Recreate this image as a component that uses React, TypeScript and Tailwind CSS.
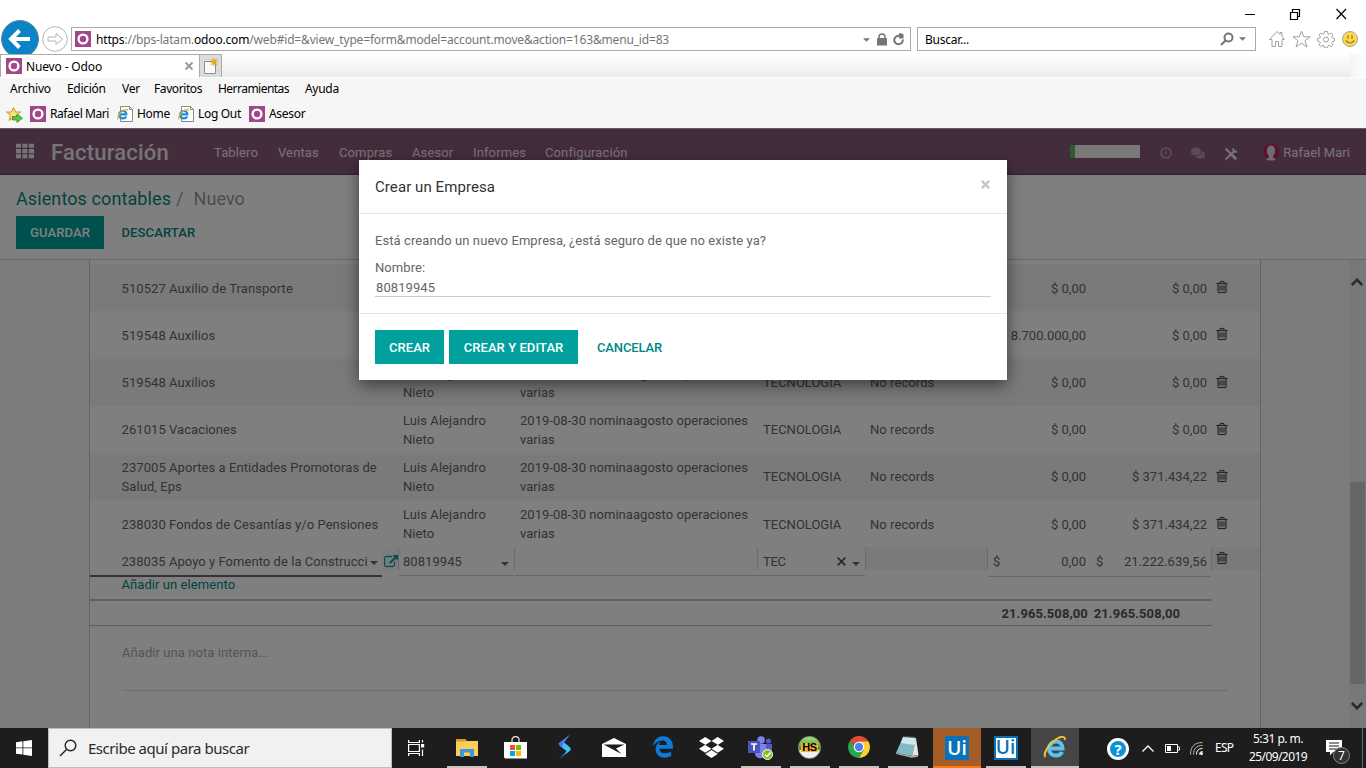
import type { ReactNode } from 'react';
import { FaComments, FaDropbox, FaEdgeLegacy } from 'react-icons/fa';

const TRASH =
  'M704 736v576q0 14-9 23t-23 9h-64q-14 0-23-9t-9-23v-576q0-14 9-23t23-9h64q14 0 23 9t9 23zm256 0v576q0 14-9 23t-23 9h-64q-14 0-23-9t-9-23v-576q0-14 9-23t23-9h64q14 0 23 9t9 23zm256 0v576q0 14-9 23t-23 9h-64q-14 0-23-9t-9-23v-576q0-14 9-23t23-9h64q14 0 23 9t9 23zm128 724v-948h-896v948q0 22 7 40.5t14.5 27 10.5 8.5h832q3 0 10.5-8.5t14.5-27 7-40.5zm-672-1076h448l-48-117q-7-9-17-11h-317q-10 2-17 11zm928 32v64q0 14-9 23t-23 9h-96v948q0 83-47 143.5t-113 60.5h-832q-66 0-113-58.5t-47-141.5v-952h-96q-14 0-23-9t-9-23v-64q0-14 9-23t23-9h309l70-167q15-37 54-63t79-26h320q40 0 79 26t54 63l70 167h309q14 0 23 9t9 23z';
const EXTERNAL =
  'M1408 928v320q0 119-84.5 203.5t-203.5 84.5h-832q-119 0-203.5-84.5t-84.5-203.5v-832q0-119 84.5-203.5t203.5-84.5h704q14 0 23 9t9 23v64q0 14-9 23t-23 9h-704q-66 0-113 47t-47 113v832q0 66 47 113t113 47h832q66 0 113-47t47-113v-320q0-14 9-23t23-9h64q14 0 23 9t9 23zm384-864v512q0 26-19 45t-45 19-45-19l-176-176-652 652q-10 10-23 10t-23-10l-114-114q-10-10-10-23t10-23l652-652-176-176q-19-19-19-45t19-45 45-19h512q26 0 45 19t19 45z';

function OdooIcon() {
  return (
    <svg viewBox="0 0 16 16" className="size-4 shrink-0">
      <rect width="16" height="16" fill="#a24689" />
      <circle cx="8" cy="8" r="4.4" fill="none" stroke="#fff" strokeWidth="2.4" />
    </svg>
  );
}

function Trash() {
  return (
    <svg viewBox="0 0 1792 1792" className="size-[14px]">
      <path d={TRASH} fill="#505050" stroke="#505050" strokeWidth="30" />
    </svg>
  );
}

function Caret({ className }: { className: string }) {
  return (
    <svg viewBox="0 0 8 4" className={className}>
      <path d="M0 0h8L4 4z" fill="currentColor" />
    </svg>
  );
}

function PageIcon() {
  return (
    <svg viewBox="0 0 16 16" className="size-4 shrink-0">
      <path d="M3.5.5h9l3 3v12h-12z" fill="#fff" stroke="#8a8a8a" />
      <path d="M12.500.5v3h3" fill="none" stroke="#8a8a8a" />
      <path d="M2.500 8.400h6.800c0-2-1.400-3.400-3.300-3.400S2.200 6.500 2.200 8.700 3.900 12.300 6 12.300c1.500 0 2.600-.7 3.200-1.900" fill="none" stroke="#1e8fd8" strokeWidth="2.200" />
      <path d="M1 13.500C-.3 11.500 2.500 6.800 6.200 4.500 8.800 2.900 11 2.700 10.500 4.800" fill="none" stroke="#eab31c" strokeWidth="1.200" />
    </svg>
  );
}

function Browser() {
  return (
    <header className="flex h-32 shrink-0 flex-col bg-white font-['Noto_Sans',sans-serif] text-[12px] text-black">
      <div className="flex h-[27px] shrink-0 items-center justify-end pt-px">
        <svg viewBox="0 0 110 12" className="mr-[16px] h-3 w-[110px]" fill="none" stroke="#000">
          <path d="M5 6.500h10" />
          <path d="M50.500 4.500h7v7h-7zM52.500 4.500v-3h7v7h-2" strokeWidth="1.200" />
          <path d="M96.500 1l9.500 10M106 1l-9.500 10" strokeWidth="1.200" />
        </svg>
      </div>
      <div className="flex h-6 shrink-0 items-center">
        <svg viewBox="0 0 38 38" className="ml-px size-[38px] shrink-0">
          <circle cx="19" cy="19" r="18.500" fill="#0a84c6" stroke="#5c88a0" />
          <path d="M29 19H11M18.500 10.500L10 19l8.500 8.500" fill="none" stroke="#fff" strokeWidth="4" />
        </svg>
        <svg viewBox="0 0 26 26" className="ml-[3px] size-[26px] shrink-0" fill="none" stroke="#b4b4b4">
          <circle cx="13" cy="13" r="12.300" />
          <path d="M6 11h8V7.500l6.500 5.500L14 18.500V15H6z" />
        </svg>
        <div className="ml-[3px] flex h-6 w-[840px] shrink-0 items-center border border-[#ababab] pr-[5px] pl-[3px]">
          <OdooIcon />
          <span className="mt-[2px] ml-[5px] tracking-[-0.17px] whitespace-nowrap text-[#757575]">
            <span className="text-black">https</span>://bps-latam.<span className="text-black">odoo.com</span>
            /web#id=&amp;view_type=form&amp;model=account.move&amp;action=163&amp;menu_id=83
          </span>
          <div className="ml-auto flex items-center text-[#767676]">
            <Caret className="mt-px mr-[7px] h-1 w-[7px]" />
            <svg viewBox="0 0 10 13" className="mr-[6px] h-[13px] w-[10px]">
              <rect y="5" width="10" height="7.500" rx=".6" fill="currentColor" />
              <path d="M2 6V3.800C2 0 8 0 8 3.800V6" fill="none" stroke="currentColor" strokeWidth="1.500" />
            </svg>
            <svg viewBox="0 0 12 13" className="h-[13px] w-3" fill="none" stroke="currentColor" strokeWidth="2">
              <path d="M9.800 6.500A4.300 4.300 0 1 1 7 3" />
              <path d="M6 0l4.500 1v4.500H6z" fill="currentColor" stroke="none" />
            </svg>
          </div>
        </div>
        <div className="ml-[6px] flex h-6 w-[339px] shrink-0 items-center border border-[#ababab] pr-[9px] pl-[7px]">
          <span className="mt-[2px] tracking-[-0.24px]">Buscar...</span>
          <svg viewBox="0 0 14 14" className="mr-[5px] ml-auto size-[14px]" fill="none" stroke="#767676">
            <circle cx="8.500" cy="5.500" r="4" strokeWidth="2" />
            <path d="M5.500 8.500L1 13" strokeWidth="2.200" />
          </svg>
          <Caret className="h-1 w-[7px] text-[#767676]" />
        </div>
        <svg viewBox="0 0 90 18" className="ml-[12px] h-[18px] w-[90px] shrink-0" fill="none" stroke="#a0a0a0">
          <path d="M1.500 9.500L9 1.500l3 3V2.500h2v4l2.500 3H14v7h-3.500v-5h-3v5H4v-7z" />
          <path d="M33.500 1l2.200 5.800h6.300l-5 3.900 2 6.300-5.500-3.800-5.500 3.800 2-6.300-5-3.900h6.300z" />
          <path d="M56.500 1.500h3l.5 2.300 1.200.5 2-1.300 1.800 1.800-1.300 2 .6 1.200 2.200.5v2.500l-2.200.6-.6 1.200 1.300 2-1.800 1.800-2-1.300-1.200.5-.5 2.200h-3l-.5-2.200-1.200-.5-2 1.300-1.800-1.800 1.300-2-.6-1.200-2.200-.6V8.500l2.200-.5.6-1.200-1.300-2L52.800 3l2 1.300 1.200-.5z" />
          <circle cx="58" cy="9.500" r="2.500" />
          <circle cx="82" cy="9" r="7.500" fill="#ffd94a" stroke="#a9a48c" />
          <path d="M80 5v4M84 5v4M77.800 10.500q4.200 5 8.400 0" stroke="#8a7a3a" strokeWidth="1.200" />
        </svg>
      </div>
      <div className="relative z-10 mt-[3px] flex h-[23px] shrink-0">
        <div className="flex w-[200px] items-center border border-b-0 border-[#ababab] bg-white pr-[6px] pl-[5px]">
          <OdooIcon />
          <span className="mt-[2px] ml-1 tracking-[-0.15px]">Nuevo - Odoo</span>
          <svg viewBox="0 0 8 8" className="ml-auto size-2" stroke="#9b9b9b" strokeWidth="2">
            <path d="M.5.5l7 7M7.500.5l-7 7" />
          </svg>
        </div>
        <div className="flex w-[22px] items-center justify-center border border-b-0 border-l-0 border-[#ababab] bg-[#dcdcdc]">
          <svg viewBox="0 0 15 16" className="h-4 w-[15px]">
            <path d="M1.500 3.500h11v12h-11z" fill="#fafafa" stroke="#8e8e8e" />
            <path d="M11 0v8M7 4h8M8.200 1.200l5.600 5.600M13.800 1.200L8.200 6.800" stroke="#f0a420" strokeWidth="1.200" />
          </svg>
        </div>
        <div className="flex-1 bg-linear-to-b from-white to-[#ececec]" />
        <div className="w-4 bg-linear-to-r from-[#f3f3f3] to-white" />
      </div>
      <div className="mt-px flex h-[50px] flex-col bg-[#f6f6f6]">
        <nav className="flex h-[22px] items-center pl-[10px] whitespace-nowrap">
          <span className="w-[57px] tracking-[-0.15px]">Archivo</span>
          <span className="w-[55px] tracking-[-0.3px]">Edición</span>
          <span className="w-[32px] tracking-[-0.3px]">Ver</span>
          <span className="w-[64px] tracking-[-0.41px]">Favoritos</span>
          <span className="w-[87px] tracking-[-0.53px]">Herramientas</span>
          <span className="tracking-[-0.3px]">Ayuda</span>
        </nav>
        <nav className="flex h-[28px] items-center pl-[6px] leading-[16px] whitespace-nowrap">
          <svg viewBox="0 0 17 17" className="mt-px mr-[7px] size-[17px]">
            <path d="M7.500 1.500l2 4.500h5l-4 3.300 1.500 5.200-4.500-3-4.500 3 1.500-5.200-4-3.300h5z" fill="#fbe27a" stroke="#c79a1e" />
            <path d="M6.500 10.500H11V8l5.500 4.200L11 16.500V14H6.500z" fill="#5cc83a" stroke="#2f8a1e" strokeWidth=".8" />
          </svg>
          <OdooIcon />
          <span className="ml-1 w-[64px] tracking-[-0.43px]">Rafael Mari</span>
          <span className="ml-[3px]"><PageIcon /></span>
          <span className="ml-[4px] w-[41px] tracking-[-0.3px]">Home</span>
          <PageIcon />
          <span className="ml-1 w-[51px] tracking-[-0.31px]">Log Out</span>
          <OdooIcon />
          <span className="ml-1 tracking-[-0.3px]">Asesor</span>
        </nav>
      </div>
    </header>
  );
}

const COLS = 'grid grid-cols-[309px_116px_243px_107px_123px_102px_121px_49px]';

type Line = { cuenta: string; debe: string; haber: string; h: string; brief?: boolean };
const LINES: Line[] = [
  { cuenta: '510527 Auxilio de Transporte', debe: '$ 0,00', haber: '$ 0,00', h: 'h-[47px] bg-[#f5f5f5] pt-px', brief: true },
  { cuenta: '519548 Auxilios', debe: '8.700.000,00', haber: '$ 0,00', h: 'h-[48px]', brief: true },
  { cuenta: '519548 Auxilios', debe: '$ 0,00', haber: '$ 0,00', h: 'h-[47px] bg-[#f5f5f5]' },
  { cuenta: '261015 Vacaciones', debe: '$ 0,00', haber: '$ 0,00', h: 'h-[47px]' },
  { cuenta: '237005 Aportes a Entidades Promotoras de Salud, Eps', debe: '$ 0,00', haber: '$ 371.434,22', h: 'h-[47px] bg-[#f5f5f5]' },
  { cuenta: '238030 Fondos de Cesantías y/o Pensiones', debe: '$ 0,00', haber: '$ 371.434,22', h: 'h-[47px] pt-px' },
];

function Row({ l }: { l: Line }) {
  return (
    <div className={`${COLS} ${l.h} items-center leading-[19px]`}>
      <span className="pr-4 pl-[31.5px]">{l.cuenta}</span>
      <span className="pl-1">{!l.brief && <>Luis Alejandro<br />Nieto</>}</span>
      <span className="pl-[5px] tracking-[0.04px]">{!l.brief && '2019-08-30 nominaagosto operaciones varias'}</span>
      <span className="pl-[5px] tracking-normal">{!l.brief && 'TECNOLOGIA'}</span>
      <span className="pl-[5px]">{!l.brief && 'No records'}</span>
      <span className="pr-[4px] text-right tracking-normal">{l.debe}</span>
      <span className="pr-[4px] text-right tracking-normal">{l.haber}</span>
      <span className="pb-[2px] pl-[4px]"><Trash /></span>
    </div>
  );
}

function EditRow() {
  return (
    <div className={`${COLS} h-[30px] tracking-[0.05px]`}>
      <div className="flex">
        <div className="flex h-[30px] w-[292px] items-center border-b-2 border-[#666] pt-px pl-[31.5px]">
          <span className="w-[246px] overflow-hidden whitespace-nowrap">238035 Apoyo y Fomento de la Construcción</span>
          <Caret className="mt-[3px] ml-[2px] h-1 w-2" />
        </div>
        <div className="flex h-[23px] w-[17px] items-center justify-end border-r border-[#d8d8d8] bg-[#f8f8f8] pt-[6px]">
          <svg viewBox="0 0 1792 1792" className="size-[14px] shrink-0"><path d={EXTERNAL} fill="#00a09d" stroke="#00a09d" strokeWidth="40" /></svg>
        </div>
      </div>
      <div className="mr-px flex h-[29px] items-center border-b border-[#ccc] pt-px pl-[4px]">
        80819945
        <Caret className="mt-[5px] mr-[5px] ml-auto h-1 w-2" />
      </div>
      <div className="flex h-[29px] border-b border-[#ccc]">
        <div className="-ml-px h-[23px] flex-1 border-x border-[#d8d8d8]" />
      </div>
      <div className="flex h-[29px] items-center border-b border-[#ccc] pt-px pl-[5px]">
        <span className="tracking-[-0.3px]">TEC</span>
        <svg viewBox="0 0 9 9" className="mr-[6px] mb-px ml-auto size-[9px]" stroke="#555" strokeWidth="1.700"><path d="M.7.7l7.600 7.600M8.300.7L.7 8.300" /></svg>
        <Caret className="mt-[4px] mr-[5px] h-1 w-2" />
      </div>
      <div className="h-[23px] border-x border-[#d8d8d8] bg-[#f5f5f5]" />
      <div className="mr-px flex h-[30px] items-center justify-between border-b border-[#ccc] pr-[3px] pl-[5px]">
        <span>$</span><span>0,00</span>
      </div>
      <div className="mr-px flex h-[30px] items-center justify-between border-b border-[#ccc] pr-[3px] pl-[6px]">
        <span>$</span><span>21.222.639,56</span>
      </div>
      <div className="h-[23px] border-l border-[#d8d8d8] bg-[#f5f5f5] pt-[4px] pl-[3px]"><Trash /></div>
    </div>
  );
}

function Modal() {
  return (
    <div className="absolute top-[32px] left-[359px] flex h-[220px] w-[648px] flex-col bg-white shadow-[0_5px_15px_rgba(0,0,0,0.5)]">
      <div className="flex h-[54px] items-center border-b border-[#e5e5e5] px-4">
        <h4 className="pt-[2px] text-[15px] tracking-[0.08px] text-[#333]">Crear un Empresa</h4>
        <svg viewBox="0 0 9 9" className="mr-px mb-[5px] ml-auto size-[9px]" stroke="#c6c6c6" strokeWidth="2.400"><path d="M.8.8l7.400 7.400M8.200.8L.8 8.200" /></svg>
      </div>
      <div className="flex h-[99px] flex-col px-4 pt-[17px] leading-[20px]">
        <p className="tracking-[0.09px]">Está creando un nuevo Empresa, ¿está seguro de que no existe ya?</p>
        <label className="mt-[7px]">Nombre:</label>
        <div className="h-[19px] border-b border-[#ccc] pl-px leading-[19px]">80819945</div>
      </div>
      <div className="flex items-start border-t border-[#e5e5e5] px-4 pt-4 font-medium">
        <button className="h-[34px] w-[69px] bg-[#00a09d] pt-px text-white">CREAR</button>
        <button className="ml-[5px] h-[34px] w-[129px] bg-[#00a09d] pt-px text-white">CREAR Y EDITAR</button>
        <button className="ml-[19px] h-[34px] pt-px tracking-[-0.13px] text-[#008784]">CANCELAR</button>
      </div>
    </div>
  );
}

function Odoo() {
  return (
    <main className="relative flex h-[600px] shrink-0 flex-col overflow-hidden bg-white font-['Roboto',sans-serif] text-[13px] tracking-[0.07px] text-[#666]">
      <div className="flex h-[47px] shrink-0 items-center border-t border-b border-t-[#c0c0c0] border-b-[#5f4656] bg-[#875a7b] pt-[2px] text-[#efe8ed]">
        <svg viewBox="0 0 18 15" className="ml-4 h-[15px] w-[18px] -translate-y-[1.5px]" fill="currentColor">
          <path d="M0 0h5v4.300H0zM6.400 0h5v4.300h-5zM12.800 0H18v4.300h-5.200zM0 5.400h5v4.300H0zM6.400 5.400h5v4.300h-5zM12.800 5.400H18v4.300h-5.200zM0 10.700h5V15H0zM6.400 10.700h5V15h-5zM12.800 10.700H18V15h-5.200z" />
        </svg>
        <span className="ml-[17px] w-[163px] text-[22px] font-medium tracking-[0.2px]">Facturación</span>
        <nav className="flex tracking-[0.12px]">
          <span className="w-[64px]">Tablero</span>
          <span className="w-[61px]">Ventas</span>
          <span className="w-[73px]">Compras</span>
          <span className="w-[61px]">Asesor</span>
          <span className="w-[72px]">Informes</span>
          <span>Configuración</span>
        </nav>
        <div className="ml-auto flex items-center pr-4">
          <div className="flex h-[13px] w-[70px] -translate-y-px bg-[#f2f2f2]"><div className="w-[5px] bg-[#5cb85c]" /></div>
          <svg viewBox="0 0 12 12" className="ml-5 size-3" fill="none" stroke="#b598ad">
            <circle cx="6" cy="6" r="4.900" strokeWidth="1.900" />
            <path d="M6.300 3.200v3.300H4" strokeWidth="1.200" />
          </svg>
          <FaComments className="ml-[19px] size-[14px] text-[#b598ad]" />
          <svg viewBox="0 0 14 14" className="mt-[3px] ml-[19px] size-[14px]" fill="none" stroke="currentColor">
            <path d="M1.500 12.500L10 4.500M9.300 1.200c-.6 2.200.9 4 3.700 3.400" strokeWidth="2" />
            <path d="M1.500 1.500l5.500 5.500" strokeWidth="2" />
            <path d="M7.500 7.500l4.700 4.700" strokeWidth="2.800" />
          </svg>
          <svg viewBox="0 0 16 17" className="ml-[25px] h-[17px] w-4">
            <circle cx="8" cy="8" r="8" fill="#c4205a" />
            <path d="M8 1.500c5.500 0 4.500 9 2 10.500v1.500l3 1.500c-2 2-8 2-10 0l3-1.500V12C3.500 10.500 2.500 1.500 8 1.500z" fill="#d8dde0" />
          </svg>
          <span className="ml-1">Rafael Mari</span>
        </div>
      </div>

      <div className="flex h-[85px] shrink-0 flex-col border-b border-[#ccc] pl-4">
        <div className="mt-[12px] text-[18px] leading-[24px]">
          <span className="tracking-[0.1px] text-[#008784]">Asientos contables</span>
          <span className="ml-[5px] text-[#999]">/</span>
          <span className="ml-[10px] text-[#999]">Nuevo</span>
        </div>
        <div className="mt-[5px] flex font-medium tracking-[0.13px]">
          <button className="h-[33px] w-[88px] bg-[#00a09d] text-white">GUARDAR</button>
          <button className="ml-[17.5px] text-[#008784]">DESCARTAR</button>
        </div>
      </div>

      <div className="flex flex-1 bg-[#f9f9f9]">
        <div className="ml-[89px] w-[1172px] border-x border-[#c8c8c8] bg-white pt-[4px]">
          {LINES.map((l, i) => <Row key={i} l={l} />)}
          <EditRow />
          <div className="h-[22px] pl-[31.5px] leading-[16px] text-[#008784]">Añadir un elemento</div>
          <div className="flex h-[27px] w-[1122px] items-center justify-end border-t-2 border-b border-t-[#c2c2c2] border-b-[#bbb] pt-px pr-[32px] font-bold text-[#555]">
            <span>21.965.508,00</span><span className="ml-[6px]">21.965.508,00</span>
          </div>
          <div className="mr-8 ml-8 h-[65px] border-b border-[#ddd] pt-[17px] leading-[20px] text-[#aaa]">Añadir una nota interna...</div>
        </div>
        <div className="ml-auto flex w-[17px] flex-col items-center bg-[#f1f1f1] text-[#555]">
          <svg viewBox="0 0 12 8" className="mt-[18px] mr-px h-2 w-3" fill="none" stroke="currentColor" strokeWidth="2.600"><path d="M.8 7L6 1.800 11.200 7" /></svg>
          <div className="mt-[196px] h-[202px] w-[15px] bg-[#cdcdcd]" />
          <svg viewBox="0 0 12 8" className="mt-[18px] mr-px h-2 w-3" fill="none" stroke="currentColor" strokeWidth="2.600"><path d="M.8 1L6 6.200 11.200 1" /></svg>
        </div>
      </div>

      <div className="absolute inset-0 bg-black/50" />
      <Modal />
    </main>
  );
}

function Task({ children, open, className = '' }: { children: ReactNode; open?: boolean; className?: string }) {
  return (
    <div className={`flex h-10 w-[49px] flex-col items-center ${className}`}>
      <div className="flex h-[38px] items-center justify-center">{children}</div>
      {open && <div className="h-[2px] w-10 bg-[#cbc3c3]" />}
    </div>
  );
}

function UiLogo({ inverse }: { inverse?: boolean }) {
  return (
    <div className={`mt-px flex size-6 items-center justify-center border-2 border-[#0b72ba] font-['Open_Sans',sans-serif] text-[19px] leading-none font-semibold ${inverse ? 'bg-white text-[#0b72ba]' : 'bg-[#0b72ba] text-white'}`}>
      Ui
    </div>
  );
}

function Taskbar() {
  return (
    <footer className="flex h-10 shrink-0 bg-[#1d1d1e] font-['Noto_Sans',sans-serif] text-[12px] text-white">
      <div className="flex w-12 items-center justify-center">
        <svg viewBox="0 0 16 16" className="size-4" fill="#fff"><path d="M0 2.200l6.500-.9v6.200H0zM7.300 1.200L16 0v7.500H7.300zM0 8.300h6.500v6.300L0 13.700zM7.300 8.300H16V16l-8.700-1.200z" /></svg>
      </div>
      <div className="flex w-[344px] items-center border border-[#bdbdbd] bg-[#f1f1f1] pl-[10px] text-[#2b2b2b]">
        <svg viewBox="0 0 18 18" className="size-[18px]" fill="none" stroke="#222" strokeWidth="1.400"><circle cx="11.500" cy="6.500" r="5.300" /><path d="M7.500 10.500L1 17" /></svg>
        <span className="ml-[11px] text-[15px] tracking-[-0.47px]">Escribe aquí para buscar</span>
      </div>
      <div className="mr-[2px] flex w-12 items-center justify-center">
        <svg viewBox="0 0 17 16" className="h-4 w-[17px]" fill="none" stroke="#fff" strokeWidth="1.200"><path d="M.6 0v2.500h10.800V0M.6 16v-2.500h10.800V16M.6 4.500h10.800v7H.6zM14.500 0v2.500M14.500 9.500V16" /><path d="M13 4h3.200v3.500H13z" fill="#fff" stroke="none" /></svg>
      </div>
      <Task open>
        <svg viewBox="0 0 22 18" className="mt-px h-[18px] w-[22px]"><path d="M0 0h9l2 2h11v15H0z" fill="#fbce5c" /><path d="M0 0h9l1.500 2.500H0z" fill="#dc9a10" /><path d="M4 10h14v8h-4v-4.500H8V18H4z" fill="#3c96d9" /></svg>
      </Task>
      <Task>
        <svg viewBox="0 0 23 23" className="size-[23px]"><path d="M8 7V4c0-4.500 7-4.500 7 0v3" fill="none" stroke="#ddd" strokeWidth="1.300" /><path d="M0 6h23v16.500H1.200L0 21.500z" fill="#fff" /><path d="M6 9h5v5H6z" fill="#f25022" /><path d="M12 9h5v5h-5z" fill="#7fba00" /><path d="M6 15h5v5H6z" fill="#00a4ef" /><path d="M12 15h5v5h-5z" fill="#ffb900" /></svg>
      </Task>
      <Task>
        <svg viewBox="0 0 13 24" className="h-6 w-[13px]"><path d="M11.500 0L0.500 8.500 2 11l6.500 5L1.500 24l11-9-1.500-3.500L6 7.500z" fill="#2f8fe8" /><path d="M11.500 0L0.500 8.500 2 11l3 2.200L6 7.500z" fill="#4a7be8" /><path d="M6 7.500l6.500 5.500v2L8 19l.5-3L4 12z" fill="#3fc4f2" /></svg>
      </Task>
      <Task>
        <svg viewBox="0 0 24 19" className="h-[19px] w-6"><path d="M0 6L12 0l12 6v13H0z" fill="#fff" /><path d="M1.500 6.500h21l-8.500 4 5.500 5.500z" fill="#1d1d1e" /></svg>
      </Task>
      <Task><FaEdgeLegacy className="size-[22px] text-[#0b7bdc]" /></Task>
      <Task><FaDropbox className="size-[25px] text-white" /></Task>
      <Task open>
        <svg viewBox="0 0 25 24" className="mt-px h-6 w-[25px]">
          <circle cx="13" cy="4" r="3.800" fill="#7b83eb" /><circle cx="20.500" cy="5" r="2.600" fill="#5059c9" />
          <path d="M16 8h8v8c0 4-5 5-7 2z" fill="#5059c9" /><path d="M7 8h11v9c0 7-11 7-11 0z" fill="#7b83eb" />
          <path d="M0 5h12v12H0z" fill="#4b53bc" /><path d="M3 8h6M6 8v6.500" stroke="#fff" strokeWidth="1.700" />
          <circle cx="19.500" cy="18.500" r="5" fill="#86c11d" stroke="#fff" /><path d="M17 18.500l2 2 3.500-4" fill="none" stroke="#fff" strokeWidth="1.400" />
        </svg>
      </Task>
      <Task open>
        <div className="flex size-[23px] items-center justify-center rounded-full border border-[#8aa080] bg-linear-to-b from-[#a5dd80] from-0% via-[#2f9a14] via-60% to-[#f0f0f0] to-62%">
          <span className="bg-[#f2b531] px-px font-['Liberation_Sans',sans-serif] text-[11px] leading-[9px] font-bold tracking-[-0.5px] text-black">HS</span>
        </div>
      </Task>
      <Task open>
        <svg viewBox="0 0 22 22" className="size-[22px]">
          <path d="M11 11L1.500 5.500A11 11 0 0 1 20.500 5.500z" fill="#e14b3b" /><path d="M11 11L1.500 5.500A11 11 0 0 0 11 22L15.800 13.800z" fill="#2da44e" /><path d="M11 5.500h9.500A11 11 0 0 1 11 22l4.800-8.200z" fill="#fdd033" />
          <circle cx="11" cy="11" r="5.300" fill="#fff" /><circle cx="11" cy="11" r="4.200" fill="#4a84f0" />
        </svg>
      </Task>
      <Task open>
        <svg viewBox="0 0 23 22" className="h-[22px] w-[23px]"><path d="M7 1l13 1-4 18L0 17z" fill="#7fbcc8" /><path d="M7 1l13 1-1.500 7L5 7z" fill="#cfe8ec" /><path d="M20 2l2.500 17-6.500 1z" fill="#e6e6e2" /><path d="M0 17l16 3 6.500-1-1 2-6 .8L0 18z" fill="#a9a9a0" /><path d="M7.500.5l12 1" stroke="#777" strokeDasharray="1 1" strokeWidth="1.500" /></svg>
      </Task>
      <div className="ml-px flex w-12 flex-col items-center border-b-2 border-[#ff7a0c] bg-[#a55e28] pt-[7px]"><UiLogo /></div>
      <Task open><UiLogo inverse /></Task>
      <div className="ml-px flex w-12 flex-col items-center border-b-2 border-[#cbc3c3] bg-[#464646] pt-[7px]">
        <svg viewBox="0 0 24 24" className="size-6"><path d="M6 13.500h13.500c0-4.500-3-7-6.500-7s-7 2.800-7 7.200 3.500 6.800 7 6.800c2.800 0 5-1.200 6-3.500" fill="none" stroke="#5cc2f0" strokeWidth="4" /><path d="M2.500 22C-.5 19 6 8.500 13.500 4 18.500 1 22.500 1 21.800 5" fill="none" stroke="#f2c52c" strokeWidth="2" /></svg>
      </div>
      <div className="ml-auto flex items-center">
        <div className="mt-[2px] flex size-[22px] items-center justify-center rounded-full border-[3px] border-white bg-[#0c93d6] text-[15px] leading-none font-bold">?</div>
        <svg viewBox="0 0 12 7" className="ml-[13px] h-[7px] w-3" fill="none" stroke="#fff" strokeWidth="1.300"><path d="M.5 6.500L6 1l5.500 5.500" /></svg>
        <svg viewBox="0 0 15 9" className="ml-[11px] h-[9px] w-[15px]" fill="none" stroke="#fff"><path d="M.5.5h12v8H.5zM13 3h1.500v3H13" /><path d="M2 2h4v5H2z" fill="#fff" stroke="none" /></svg>
        <svg viewBox="0 0 13 13" className="ml-[10px] size-[13px]" fill="none" stroke="#fff"><path d="M9.500 12.500c0-2 1-3 3-3M6.500 12.500c0-4 2-6 6-6" /><path d="M3.500 12.500c0-6 3-9 9-9M.5 12.500c0-8 4-12 12-12" stroke="#b5b5b5" /><circle cx="11.500" cy="11.500" r="1.500" fill="#fff" stroke="none" /></svg>
        <span className="ml-[12px] w-[33px] tracking-[-0.7px]">ESP</span>
        <div className="flex w-[60px] flex-col items-center leading-[18px] whitespace-nowrap">
          <span className="tracking-[-0.5px]">5:31 p. m.</span>
          <span className="tracking-[-0.58px]">25/09/2019</span>
        </div>
        <div className="relative ml-[18px] h-[26px] w-[24px]">
          <svg viewBox="0 0 16 16" className="mt-[5px] size-4"><path d="M0 0h16v12H7l-3 3.500V12H0z" fill="#fff" /><path d="M3 3h10M3 6h10M3 9h10" stroke="#1d1d1e" /></svg>
          <span className="absolute top-[12px] left-[7px] flex size-[17px] items-center justify-center rounded-full border border-[#8a8a8a] bg-[#333] text-[12px]">7</span>
        </div>
        <div className="ml-[12px] h-10 w-[4px] border-l border-[#666]" />
      </div>
    </footer>
  );
}

export default function App() {
  return (
    <div className="flex h-[768px] w-[1366px] flex-col overflow-hidden">
      <Browser />
      <Odoo />
      <Taskbar />
    </div>
  );
}
